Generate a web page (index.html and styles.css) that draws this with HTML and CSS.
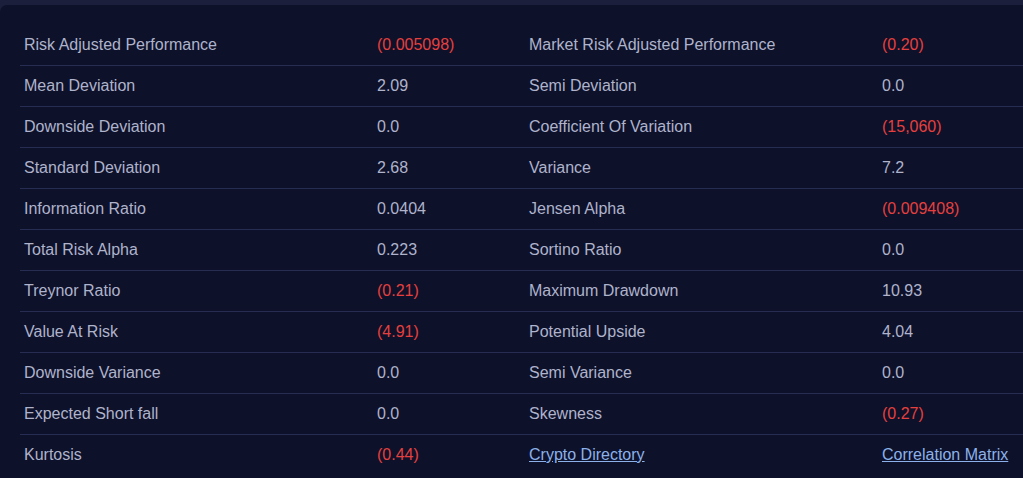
FILE: index.html
```html
<!DOCTYPE html>
<html>
<head>
<meta charset="utf-8">
<link rel="stylesheet" href="styles.css">
</head>
<body>
<div class="card">
  <div class="table">
    <div class="row"><span class="c">Risk Adjusted Performance</span><span class="c neg">(0.005098)</span><span class="c">Market Risk Adjusted Performance</span><span class="c neg">(0.20)</span></div>
    <div class="row"><span class="c">Mean Deviation</span><span class="c">2.09</span><span class="c">Semi Deviation</span><span class="c">0.0</span></div>
    <div class="row"><span class="c">Downside Deviation</span><span class="c">0.0</span><span class="c">Coefficient Of Variation</span><span class="c neg">(15,060)</span></div>
    <div class="row"><span class="c">Standard Deviation</span><span class="c">2.68</span><span class="c">Variance</span><span class="c">7.2</span></div>
    <div class="row"><span class="c">Information Ratio</span><span class="c">0.0404</span><span class="c">Jensen Alpha</span><span class="c neg">(0.009408)</span></div>
    <div class="row"><span class="c">Total Risk Alpha</span><span class="c">0.223</span><span class="c">Sortino Ratio</span><span class="c">0.0</span></div>
    <div class="row"><span class="c">Treynor Ratio</span><span class="c neg">(0.21)</span><span class="c">Maximum Drawdown</span><span class="c">10.93</span></div>
    <div class="row"><span class="c">Value At Risk</span><span class="c neg">(4.91)</span><span class="c">Potential Upside</span><span class="c">4.04</span></div>
    <div class="row"><span class="c">Downside Variance</span><span class="c">0.0</span><span class="c">Semi Variance</span><span class="c">0.0</span></div>
    <div class="row"><span class="c">Expected Short fall</span><span class="c">0.0</span><span class="c">Skewness</span><span class="c neg">(0.27)</span></div>
    <div class="row last"><span class="c">Kurtosis</span><span class="c neg">(0.44)</span><span class="c"><a href="#">Crypto Directory</a></span><span class="c"><a href="#">Correlation Matrix</a></span></div>
  </div>
</div>
</body>
</html>
```

FILE: styles.css
```css
html, body {
  margin: 0;
  padding: 0;
  background: #1b1f3b;
  overflow: hidden;
}
body {
  font-family: "Liberation Sans", Arial, sans-serif;
  font-size: 16px;
  color: #afb3cc;
}
.card {
  margin-top: 5px;
  width: calc(100% + 20px);
  height: 480px;
  background: #0d1129;
  border-top-left-radius: 7px;
  padding: 20px 0 0 20px;
  box-sizing: border-box;
}
.table {
  display: flex;
  flex-direction: column;
}
.row {
  display: grid;
  grid-template-columns: 353px 152px 353px 1fr;
  height: 40px;
  border-bottom: 1px solid #272c52;
  align-items: center;
}
.row.last {
  border-bottom: none;
}
.c {
  padding-left: 4px;
  white-space: nowrap;
}
.neg {
  color: #e5403f;
}
a {
  color: #8cb1ea;
  text-decoration: underline;
}
```
